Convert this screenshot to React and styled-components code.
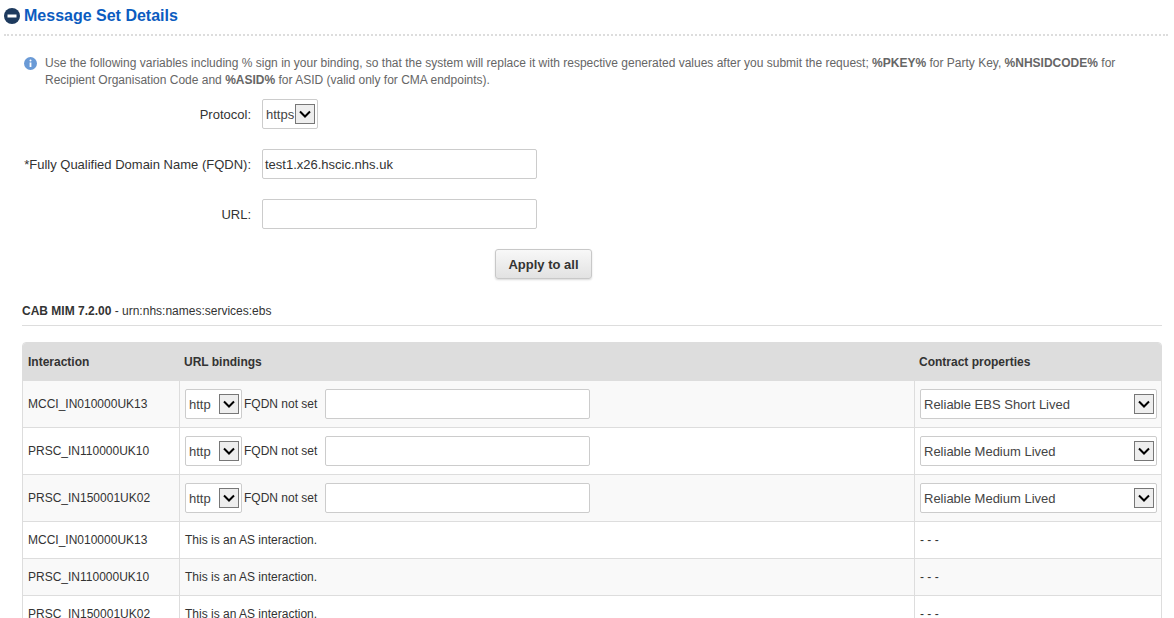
import React from "react";
import styled, { createGlobalStyle } from "styled-components";

const Global = createGlobalStyle`
  body { margin: 0; font-family: "Liberation Sans", Arial, sans-serif; background: #fff; color: #333; }
`;

const Page = styled.div`
  padding: 5px 0 0 4px;
  width: 1164px;
`;

const Title = styled.h2`
  margin: 0;
  display: flex;
  align-items: center;
  gap: 4px;
  font-size: 16px;
  font-weight: bold;
  color: #0b5cc0;
  height: 22px;
`;

const Dashed = styled.div`
  margin: 7px 0 0 0;
  border-top: 2px dotted #ddd;
`;

const Info = styled.div`
  display: flex;
  gap: 8px;
  margin: 19px 0 0 20px;
  width: 1095px;
  font-size: 12px;
  line-height: 17px;
  color: #666;
  b { color: #666; }
`;

const Form = styled.div`
  display: grid;
  grid-template-columns: 247px auto;
  column-gap: 11px;
  row-gap: 20px;
  margin-top: 10px;
  align-items: center;
`;

const Label = styled.label`
  text-align: right;
  font-size: 13px;
  color: #333;
`;

const TextBox = styled.div`
  box-sizing: border-box;
  width: ${(p) => p.w}px;
  height: ${(p) => p.h || 30}px;
  border: 1px solid #ccc;
  border-radius: 2px;
  background: #fff;
  font-size: 13px;
  display: flex;
  align-items: center;
  padding-left: 2px;
`;

const Select = styled.div`
  box-sizing: border-box;
  width: ${(p) => p.w}px;
  height: 30px;
  border: 1px solid #ccc;
  border-radius: 2px;
  background: #fff;
  display: flex;
  align-items: center;
  justify-content: space-between;
  padding: 0 2px 0 3px;
  font-size: 13px;
  color: #444;
`;

const Arrow = styled.span`
  box-sizing: border-box;
  width: 20px;
  height: 20px;
  border: 1px solid #777;
  background: #eee;
  display: flex;
  align-items: center;
  justify-content: center;
`;

const ButtonRow = styled.div`
  display: flex;
  margin: 20px 0 0 491px;
`;

const Button = styled.button`
  width: 97px;
  height: 30px;
  border: 1px solid #c8c8c8;
  border-radius: 3px;
  background: linear-gradient(#f8f8f8, #e2e2e2);
  font-family: inherit;
  font-size: 13px;
  font-weight: bold;
  color: #333;
  box-shadow: 0 1px 2px rgba(0,0,0,0.15);
`;

const Section = styled.div`
  margin: 25px 6px 0 18px;
  font-size: 12px;
  padding-bottom: 7px;
  border-bottom: 1px solid #ddd;
  b { font-weight: bold; }
`;

const Table = styled.div`
  margin: 16px 6px 0 18px;
  border: 1px solid #ddd;
  border-radius: 4px 4px 0 0;
  overflow: hidden;
  font-size: 12px;
`;

const Row = styled.div`
  display: grid;
  grid-template-columns: 156px 735px 1fr;
  height: ${(p) => p.h}px;
  background: ${(p) => (p.head ? "#dddddd" : p.odd ? "#f9f9f9" : "#fff")};
  border-top: ${(p) => (p.head ? "none" : "1px solid #ddd")};
  font-weight: ${(p) => (p.head ? "bold" : "normal")};
`;

const Cell = styled.div`
  display: flex;
  align-items: center;
  gap: 2px;
  padding-left: 5px;
  border-left: ${(p) => (p.first || p.head ? "none" : "1px solid #ddd")};
`;

const Chevron = () => (
  <svg width="12" height="8" viewBox="0 0 12 8">
    <path d="M1 1.5 L6 6.5 L11 1.5" stroke="#000" strokeWidth="2" fill="none" />
  </svg>
);

const Minus = () => (
  <svg width="16" height="16" viewBox="0 0 16 16">
    <circle cx="8" cy="8" r="8" fill="#1d3a5e" />
    <rect x="3.5" y="6.5" width="9" height="3" fill="#fff" />
  </svg>
);

const InfoIcon = () => (
  <svg width="13" height="13" viewBox="0 0 13 13" style={{ flexShrink: 0, marginTop: 2 }}>
    <circle cx="6.5" cy="6.5" r="6.5" fill="#6a9ad6" />
    <rect x="5.6" y="5.5" width="1.8" height="4.5" fill="#fff" />
    <circle cx="6.5" cy="3.6" r="1" fill="#fff" />
  </svg>
);

const bindRows = [
  ["MCCI_IN010000UK13", "Reliable EBS Short Lived"],
  ["PRSC_IN110000UK10", "Reliable Medium Lived"],
  ["PRSC_IN150001UK02", "Reliable Medium Lived"],
];
const asRows = ["MCCI_IN010000UK13", "PRSC_IN110000UK10", "PRSC_IN150001UK02"];

export default function App() {
  return (
    <Page>
      <Global />
      <Title><Minus />Message Set Details</Title>
      <Dashed />
      <Info>
        <InfoIcon />
        <div>
          Use the following variables including % sign in your binding, so that the system will replace it with respective generated values after you submit the request; <b>%PKEY%</b> for Party Key, <b>%NHSIDCODE%</b> for Recipient Organisation Code and <b>%ASID%</b> for ASID (valid only for CMA endpoints).
        </div>
      </Info>
      <Form>
        <Label>Protocol:</Label>
        <Select w={56}>https<Arrow><Chevron /></Arrow></Select>
        <Label>*Fully Qualified Domain Name (FQDN):</Label>
        <TextBox w={275}>test1.x26.hscic.nhs.uk</TextBox>
        <Label>URL:</Label>
        <TextBox w={275} />
      </Form>
      <ButtonRow><Button>Apply to all</Button></ButtonRow>
      <Section><b>CAB MIM 7.2.00</b> - urn:nhs:names:services:ebs</Section>
      <Table>
        <Row head h={37}>
          <Cell head>Interaction</Cell>
          <Cell head>URL bindings</Cell>
          <Cell head>Contract properties</Cell>
        </Row>
        {bindRows.map(([id, prop], i) => (
          <Row key={id} h={46} odd={i % 2 === 0}>
            <Cell first>{id}</Cell>
            <Cell>
              <Select w={57}>http<Arrow><Chevron /></Arrow></Select>
              <span>FQDN not set</span>
              <TextBox w={265} style={{ marginLeft: 6 }} />
            </Cell>
            <Cell>
              <Select w={237}>{prop}<Arrow><Chevron /></Arrow></Select>
            </Cell>
          </Row>
        ))}
        {asRows.map((id, i) => (
          <Row key={"as" + i} h={36} odd={i % 2 === 1}>
            <Cell first>{id}</Cell>
            <Cell>This is an AS interaction.</Cell>
            <Cell>- - -</Cell>
          </Row>
        ))}
      </Table>
    </Page>
  );
}
